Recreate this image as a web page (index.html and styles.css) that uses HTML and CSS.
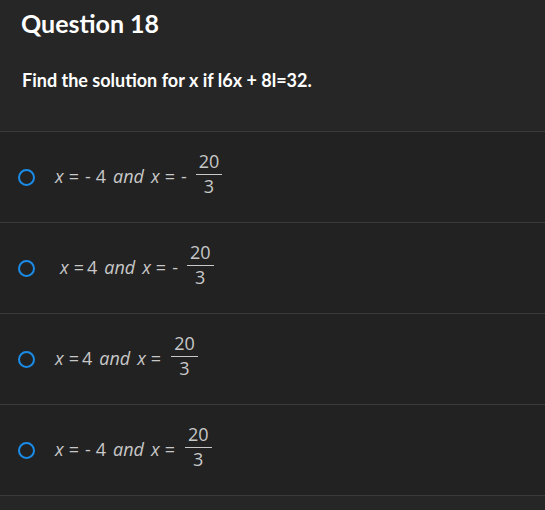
FILE: index.html
```html
<!DOCTYPE html>
<html lang="en">
<head>
  <meta charset="UTF-8">
  <title>Question 18</title>
  <link rel="stylesheet" href="styles.css">
</head>
<body>
<div class="question">
  <h1>Question 18</h1>
  <p class="prompt">Find the solution for x if l6x + 8l=32.</p>
</div>

<div class="options">
  <label class="option">
    <span class="radio"></span>
    <span class="math"><i>x</i><span class="eq">=</span><span class="neg">-</span>4<i class="word">and</i><i>x</i><span class="eq">=</span><span class="neg">-</span><span class="frac"><span class="num">20</span><span class="den">3</span></span></span>
  </label>
  <label class="option">
    <span class="radio"></span>
    <span class="math shift"><i>x</i><span class="eq tight">=</span>4<i class="word">and</i><i>x</i><span class="eq">=</span><span class="neg">-</span><span class="frac"><span class="num">20</span><span class="den">3</span></span></span>
  </label>
  <label class="option">
    <span class="radio"></span>
    <span class="math"><i>x</i><span class="eq tight">=</span>4<i class="word">and</i><i>x</i><span class="eq">=</span><span class="frac"><span class="num">20</span><span class="den">3</span></span></span>
  </label>
  <label class="option">
    <span class="radio"></span>
    <span class="math"><i>x</i><span class="eq">=</span><span class="neg">-</span>4<i class="word">and</i><i>x</i><span class="eq">=</span><span class="frac"><span class="num">20</span><span class="den">3</span></span></span>
  </label>
</div>
</body>
</html>
```

FILE: styles.css
```css
body {
  margin: 0;
  background: #262626;
  font-family: "Lato", "Open Sans", sans-serif;
  color: #fff;
}

.question {
  padding: 8px 21px 0;
  height: 123px;
}

h1 {
  margin: 0;
  font-size: 25px;
  font-weight: bold;
}

.prompt {
  margin: 31px 0 0 1px;
  font-size: 18px;
  font-weight: bold;
}

.options {
  border-top: 1px solid #3a3a3a;
  background: #222;
}

.option {
  display: flex;
  align-items: center;
  height: 90px;
  padding-left: 18px;
  border-bottom: 1px solid #3a3a3a;
}

.radio {
  width: 13px;
  height: 13px;
  border: 2px solid #1a8ce8;
  border-radius: 50%;
  margin-right: 20px;
  flex: none;
}

.math {
  margin-bottom: 8px;
  font-family: "Open Sans", sans-serif;
  font-size: 18px;
  color: #c8c8c8;
  white-space: nowrap;
}

.math.shift {
  margin-left: 5px;
}

.math i {
  font-style: italic;
}

.eq {
  margin: 0 6px 0 5px;
}

.eq.tight {
  margin: 0 3px 0 5px;
}

.neg {
  margin-right: 5px;
}

.word {
  margin: 0 7px;
}

.frac {
  display: inline-block;
  vertical-align: -10px;
  margin-left: 4px;
  text-align: center;
  font-size: 18px;
  line-height: 18px;
}

.num {
  display: block;
  padding: 0 3px 4px;
  border-bottom: 1px solid #c8c8c8;
}

.den {
  display: block;
  padding-top: 2px;
}
```
